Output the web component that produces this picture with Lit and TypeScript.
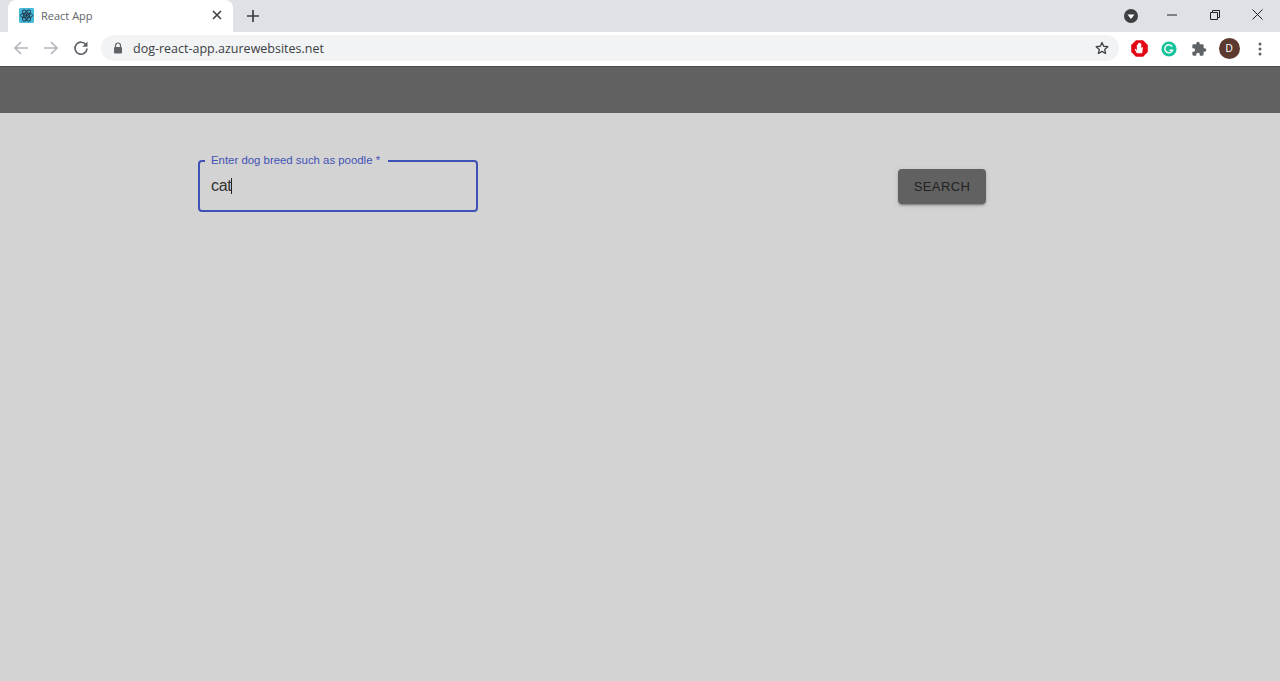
import { LitElement, html, css } from "lit";
import { customElement } from "lit/decorators.js";

@customElement("app-root")
export class AppRoot extends LitElement {
  static styles = css`
    :host { display: flex; flex-direction: column; height: 100vh; overflow: hidden; background: #d3d3d3; font-family: "Liberation Sans", Arial, sans-serif; }
    svg { display: block; flex: none; }
    .tabstrip { height: 32px; background: #dee1e6; display: flex; align-items: flex-end; padding-left: 8px; flex: none; }
    .tab { width: 225px; height: 32px; box-sizing: border-box; background: #fff; border-radius: 8px 8px 0 0; display: flex; align-items: center; padding: 0 11px 2px 11px; }
    .tabtitle { font: 11px "Open Sans", "Noto Sans", sans-serif; color: #5f6368; margin-left: 7px; flex: 1; }
    .newtab { margin: 0 0 1px 14px; align-self: center; }
    .spacer { flex: 1; }
    .winbtns { display: flex; align-items: center; align-self: stretch; padding: 0 1px 3px 0; }
    .profile-drop { margin-right: 12px; margin-top: 3px; }
    .winbtn { width: 43px; display: flex; justify-content: center; }
    .toolbar { height: 34px; background: #fff; display: flex; align-items: center; flex: none; box-sizing: border-box; padding: 0 0 2px 13px; }
    .nav { display: flex; gap: 14px; margin-right: 12px; }
    .omnibox { width: 1018px; height: 26px; border-radius: 13px; background: #f1f3f4; display: flex; align-items: center; box-sizing: border-box; padding: 0 10px 0 12px; flex: none; }
    .url { font: 12.5px "Open Sans", "Noto Sans", sans-serif; color: #3c4043; margin-left: 10px; flex: 1; }
    .exts { display: flex; align-items: center; margin: 1px 0 0 5px; }
    .ext { width: 30px; display: flex; justify-content: center; }
    .avatar { width: 21px; height: 21px; border-radius: 50%; background: #5d3a30; color: #fff; font: 10px "Liberation Sans", sans-serif; display: flex; align-items: center; justify-content: center; }
    .menu { margin: 1px 0 0 14px; }
    .appbar { height: 47px; background: #616161; flex: none; border-top: 1px solid #4a4a4a; box-sizing: border-box; }
    .main { flex: 1; padding: 47px 0 0 198px; }
    .row { width: 788px; display: flex; align-items: center; justify-content: space-between; }
    .field { position: relative; width: 280px; height: 52px; box-sizing: border-box; border: 2px solid #3f51b5; border-radius: 4px; padding: 0 11px; display: flex; align-items: center; }
    .label { position: absolute; left: 5px; top: -10px; padding: 0 8px 0 6px; background: #d3d3d3; font-size: 11.4px; line-height: 16px; color: #3f51b5; white-space: nowrap; }
    .value { font-size: 16px; color: #333; line-height: 16px; letter-spacing: -0.3px; border-right: 1px solid #222; margin-right: -1px; }
    .search { width: 88px; height: 35px; padding: 0; border: 0; border-radius: 4px; background: #616161; color: #222; font: 13px "Liberation Sans", sans-serif; letter-spacing: 0.4px; box-shadow: 0 3px 1px -2px rgba(0,0,0,.2), 0 2px 2px 0 rgba(0,0,0,.14), 0 1px 5px 0 rgba(0,0,0,.12); }
  `;

  render() {
    return html`
      <div class="tabstrip">
        <div class="tab">
          <svg width="15" height="15" viewBox="0 0 16 16">
            <rect width="16" height="16" rx="1.5" fill="#45b8d8"/>
            <g fill="none" stroke="#20364a" stroke-width="1">
              <ellipse cx="8" cy="8" rx="6.6" ry="2.6"/>
              <ellipse cx="8" cy="8" rx="6.6" ry="2.6" transform="rotate(60 8 8)"/>
              <ellipse cx="8" cy="8" rx="6.6" ry="2.6" transform="rotate(120 8 8)"/>
            </g>
            <circle cx="8" cy="8" r="1.5" fill="#20364a"/>
          </svg>
          <span class="tabtitle">React App</span>
          <svg width="10" height="10" viewBox="0 0 10 10"><path d="M1 1l8 8M9 1l-8 8" stroke="#3c4043" stroke-width="1.6"/></svg>
        </div>
        <svg class="newtab" width="12" height="12" viewBox="0 0 12 12"><path d="M6 0v12M0 6h12" stroke="#3c4043" stroke-width="1.7"/></svg>
        <div class="spacer"></div>
        <div class="winbtns">
          <svg class="profile-drop" width="14" height="14" viewBox="0 0 14 14"><circle cx="7" cy="7" r="7" fill="#3c4043"/><path d="M3.500 5.500h7L7 10z" fill="#fff"/></svg>
          <div class="winbtn"><svg width="10" height="10" viewBox="0 0 10 10"><path d="M0 5h10" stroke="#222" stroke-width="1"/></svg></div>
          <div class="winbtn"><svg width="10" height="10" viewBox="0 0 10 10"><path d="M2.500 2.500V.5h7v7h-2M.5 2.500h7v7h-7z" fill="none" stroke="#222" stroke-width="1"/></svg></div>
          <div class="winbtn"><svg width="11" height="11" viewBox="0 0 11 11"><path d="M.5.5l10 10M10.500.5l-10 10" stroke="#222" stroke-width="1"/></svg></div>
        </div>
      </div>
      <div class="toolbar">
        <div class="nav">
          <svg width="16" height="16" viewBox="0 0 16 16"><path d="M15 8H2M8 2L2 8l6 6" fill="none" stroke="#b4b7bb" stroke-width="1.7"/></svg>
          <svg width="16" height="16" viewBox="0 0 16 16"><path d="M1 8h13M8 2l6 6-6 6" fill="none" stroke="#b4b7bb" stroke-width="1.7"/></svg>
          <svg width="16" height="16" viewBox="0 0 16 16"><path d="M13.200 5.200A6 6 0 1 0 14 8.500" fill="none" stroke="#5f6368" stroke-width="1.7"/><path d="M14.500 1.500v5.200H9.300z" fill="#5f6368"/></svg>
        </div>
        <div class="omnibox">
          <svg width="10" height="12" viewBox="0 0 10 12"><path d="M2.500 5V3.500a2.500 2.500 0 0 1 5 0V5" fill="none" stroke="#5f6368" stroke-width="1.200"/><rect x="1" y="5" width="8" height="6.500" rx="1" fill="#5f6368"/></svg>
          <span class="url">dog-react-app.azurewebsites.net</span>
          <svg width="14" height="14" viewBox="0 0 24 24"><path d="M12 2.500l2.900 6.500 7.100.7-5.400 4.700 1.600 7-6.200-3.700-6.200 3.700 1.600-7L2 9.700 9.100 9z" fill="none" stroke="#444" stroke-width="2.200" stroke-linejoin="round"/></svg>
        </div>
        <div class="exts">
          <div class="ext"><svg width="17" height="17" viewBox="0 0 18 18"><path d="M5.500 1h7L17 5.500v7L12.500 17h-7L1 12.500v-7z" fill="#e30613" stroke="#e30613" stroke-width="1.500" stroke-linejoin="round"/><path d="M6.200 14l-2.400-4.200 1-.6L6.200 11V5h1.100v3.500V3.400h1.200v5.100V3h1.200v5.500V3.800h1.200V9l.7-1.400h1.100L11.800 14z" fill="#fff"/></svg></div>
          <div class="ext"><svg width="16" height="16" viewBox="0 0 18 18"><circle cx="9" cy="9" r="8.500" fill="#15c39a"/><path d="M12.500 6.200A4.500 4.500 0 1 0 13 10.500H9.500" fill="none" stroke="#fff" stroke-width="1.600"/></svg></div>
          <div class="ext"><svg width="16" height="16" viewBox="0 0 24 24"><path d="M20.500 11H19V7a2 2 0 0 0-2-2h-4V3.500a2.500 2.500 0 0 0-5 0V5H4a2 2 0 0 0-2 2v3.800h1.500a2.700 2.700 0 0 1 0 5.400H2V20a2 2 0 0 0 2 2h3.800v-1.500a2.700 2.700 0 0 1 5.400 0V22H17a2 2 0 0 0 2-2v-4h1.500a2.500 2.500 0 0 0 0-5z" fill="#5f6368"/></svg></div>
          <div class="ext"><div class="avatar">D</div></div>
        </div>
        <svg class="menu" width="4" height="14" viewBox="0 0 4 14"><circle cx="2" cy="2" r="1.500" fill="#5f6368"/><circle cx="2" cy="7" r="1.500" fill="#5f6368"/><circle cx="2" cy="12" r="1.500" fill="#5f6368"/></svg>
      </div>
      <div class="appbar"></div>
      <div class="main">
        <div class="row">
          <div class="field">
            <span class="label">Enter dog breed such as poodle *</span>
            <span class="value">cat</span>
          </div>
          <button class="search">SEARCH</button>
        </div>
      </div>
    `;
  }
}
